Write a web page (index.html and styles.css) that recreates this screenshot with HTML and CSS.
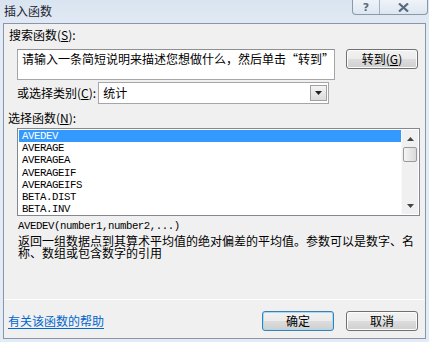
FILE: index.html
```html
<!DOCTYPE html>
<html lang="zh">
<head>
<meta charset="utf-8">
<link rel="stylesheet" href="styles.css">
</head>
<body>
<div class="window">
  <div class="titlebar">
    <span class="title">插入函数</span>
    <div class="caption-btns">
      <span class="cap-btn help">?</span>
      <span class="cap-btn close"><svg width="11" height="9" viewBox="0 0 11 9"><path d="M1 0.5 L10 8.5 M10 0.5 L1 8.5" stroke="#5a6a7e" stroke-width="2.2" fill="none"/></svg></span>
    </div>
  </div>
  <div class="client">
    <div class="label lbl-search">搜索函数(<u>S</u>):</div>
    <div class="search-row">
      <div class="textarea">请输入一条简短说明来描述您想做什么，然后单击“转到”</div>
      <div class="btn btn-go">转到(<u>G</u>)</div>
    </div>
    <div class="cat-row">
      <span class="label">或选择类别(<u>C</u>):</span>
      <div class="select">
        <span class="sel-text">统计</span>
        <span class="sel-arrow"><svg width="7" height="4" viewBox="0 0 7 4"><path d="M0 0 H7 L3.5 4 Z" fill="#222"/></svg></span>
      </div>
    </div>
    <div class="label lbl-func">选择函数(<u>N</u>):</div>
    <div class="listbox">
      <ul class="items">
        <li class="sel">AVEDEV</li>
        <li>AVERAGE</li>
        <li>AVERAGEA</li>
        <li>AVERAGEIF</li>
        <li>AVERAGEIFS</li>
        <li>BETA.DIST</li>
        <li>BETA.INV</li>
      </ul>
      <div class="scrollbar">
        <span class="sb-arrow"><svg width="7" height="4" viewBox="0 0 7 4"><path d="M0 4 H7 L3.5 0 Z" fill="#444"/></svg></span>
        <span class="sb-thumb"></span>
        <span class="sb-track"></span>
        <span class="sb-arrow"><svg width="7" height="4" viewBox="0 0 7 4"><path d="M0 0 H7 L3.5 4 Z" fill="#444"/></svg></span>
      </div>
    </div>
    <div class="syntax">AVEDEV(number1,number2,...)</div>
    <div class="desc">返回一组数据点到其算术平均值的绝对偏差的平均值。参数可以是数字、名称、数组或包含数字的引用</div>
    <div class="separator"></div>
    <div class="bottom-row">
      <a class="help-link" href="#">有关该函数的帮助</a>
      <div class="btn btn-ok">确定</div>
      <div class="btn btn-cancel">取消</div>
    </div>
  </div>
</div>
</body>
</html>
```
FILE: styles.css
```css
* { box-sizing: border-box; }
html, body { margin: 0; padding: 0; }
body {
  width: 429px;
  height: 342px;
  overflow: hidden;
  font-family: "Noto Sans CJK SC", "Noto Sans", sans-serif;
  font-size: 12px;
  color: #000;
  background: #dfe8f2;
}
u { text-decoration: underline; text-underline-offset: 1px; }
.window {
  width: 429px;
  height: 342px;
  display: flex;
  flex-direction: column;
  background: linear-gradient(#d9e4f1, #e3ebf4 30px, #e3ebf4);
}
.titlebar {
  height: 23px;
  display: flex;
  align-items: flex-start;
  flex: none;
}
.title {
  padding-left: 4px;
  padding-top: 2px;
  line-height: 17px;
  font-size: 12px;
  color: #1c2430;
}
.caption-btns {
  margin-left: auto;
  margin-right: 1px;
  display: flex;
  height: 15px;
  border: 1px solid #8a98aa;
  border-top: none;
  border-radius: 0 0 4px 4px;
  background: linear-gradient(#eef3f8, #dde6f0);
}
.cap-btn {
  display: flex;
  align-items: center;
  justify-content: center;
  height: 14px;
}
.cap-btn.help {
  width: 27px;
  border-right: 1px solid #a3b0c0;
  font-family: "DejaVu Sans", sans-serif;
  font-size: 11px;
  font-weight: bold;
  color: #5a6a7e;
}
.cap-btn.close { width: 47px; }
.client {
  flex: 1;
  margin: 0 3px 3px 3px;
  border: 1px solid #8796aa;
  background: #f0f0f0;
  padding: 4px 0 0 0;
  display: flex;
  flex-direction: column;
}
.label { line-height: 14px; white-space: nowrap; }
.lbl-search { margin-left: 5px; }
.search-row {
  margin-top: 7px;
  margin-left: 13px;
  display: flex;
  align-items: flex-start;
}
.textarea {
  width: 318px;
  height: 31px;
  border: 1px solid #a6a6a6;
  border-top-color: #8e8f8f;
  background: #fff;
  padding: 1px 4px;
  line-height: 16px;
  white-space: nowrap;
  overflow: hidden;
}
.btn {
  width: 72px;
  height: 20px;
  border: 1px solid #707070;
  border-radius: 3px;
  background: linear-gradient(#f2f2f2 0%, #ebebeb 50%, #dddddd 51%, #cfcfcf 100%);
  display: flex;
  align-items: center;
  justify-content: center;
  line-height: 14px;
  box-shadow: inset 0 0 0 1px #fcfcfc;
}
.btn-go { margin-left: 11px; }
.cat-row {
  margin-top: 2px;
  margin-left: 13px;
  display: flex;
  align-items: center;
}
.select {
  margin-left: 2px;
  width: 231px;
  height: 22px;
  border: 1px solid #a6a6a6;
  background: #fff;
  display: flex;
  align-items: center;
  padding-left: 4px;
}
.sel-text { flex: 1; line-height: 14px; }
.sel-arrow {
  width: 17px;
  height: 16px;
  margin-right: 1px;
  border: 1px solid #a0a0a0;
  background: linear-gradient(#f4f4f4, #dcdcdc);
  display: flex;
  align-items: center;
  justify-content: center;
}
.lbl-func { margin-top: 7px; margin-left: 4px; }
.listbox {
  margin-top: 3px;
  margin-left: 13px;
  width: 403px;
  height: 88px;
  border: 1px solid #828790;
  background: #fff;
  display: flex;
  padding: 1px;
}
.items {
  list-style: none;
  margin: 0;
  padding: 0;
  flex: 1;
  font-family: "Liberation Mono", monospace;
  font-size: 10.7px;
  letter-spacing: -0.42px;
}
.items li {
  height: 12.2px;
  line-height: 12.2px;
  padding-left: 3px;
  white-space: nowrap;
}
.items li.sel {
  background: #3399ff;
  color: #fff;
}
.scrollbar {
  width: 17px;
  display: flex;
  flex-direction: column;
  background: #f0f0f0;
  border-left: 1px solid #f8f8f8;
}
.sb-arrow {
  height: 17px;
  display: flex;
  align-items: center;
  justify-content: center;
}
.sb-thumb {
  height: 15px;
  margin: 0 1px;
  border: 1px solid #9a9a9a;
  border-radius: 2px;
  background: linear-gradient(90deg, #f4f4f4, #dadada);
}
.sb-track { flex: 1; }
.syntax {
  margin-top: 3px;
  margin-left: 14px;
  font-family: "Liberation Mono", monospace;
  font-size: 10.7px;
  letter-spacing: -0.42px;
  line-height: 14px;
  white-space: nowrap;
}
.desc {
  margin-left: 14px;
  margin-top: 2px;
  width: 405px;
  line-height: 12px;
}
.separator {
  margin-top: 40px;
  height: 1px;
  background: #dcdcdc;
  border-bottom: 1px solid #ffffff;
}
.bottom-row {
  margin-top: 11px;
  display: flex;
  align-items: center;
}
.help-link {
  margin-left: 4px;
  color: #0066cc;
  text-decoration: underline;
  text-underline-offset: 2px;
  line-height: 14px;
  margin-right: auto;
}
.btn-ok {
  border-color: #3c7fb1;
  box-shadow: inset 0 0 0 1px #a7d9f5;
}
.btn-cancel { margin-left: 12px; margin-right: 7px; }
```
